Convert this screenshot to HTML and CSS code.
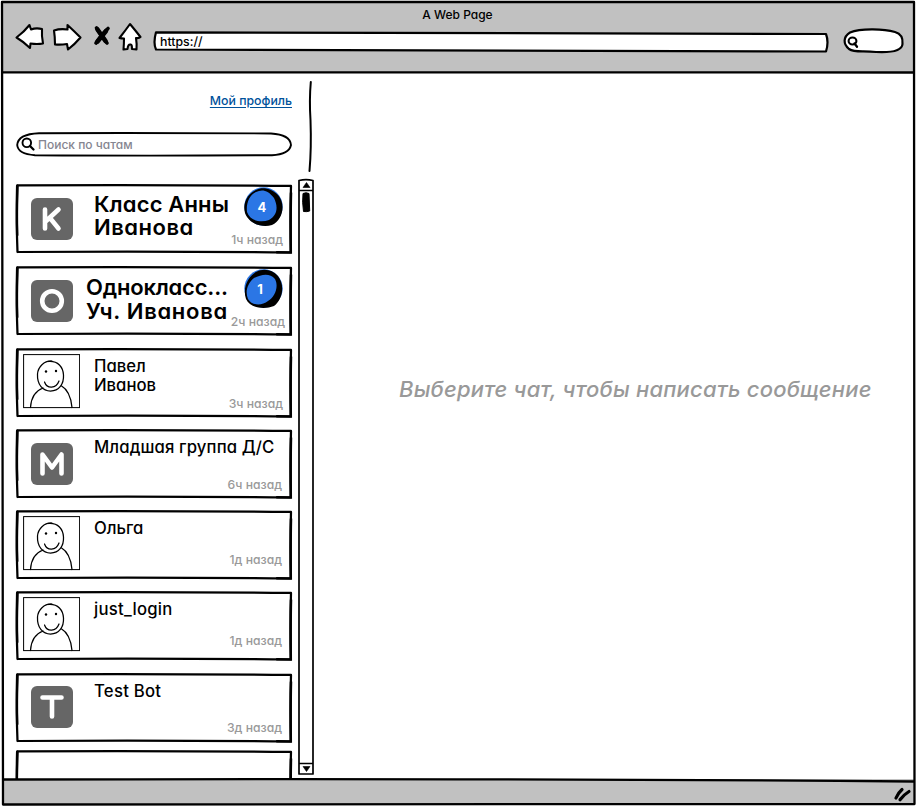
FILE: index.html
```html
<!DOCTYPE html>
<html lang="ru">
<head>
<meta charset="utf-8">
<title>A Web Page</title>
<link rel="stylesheet" href="styles.css">
</head>
<body>
<svg class="defs" width="0" height="0" aria-hidden="true">
  <defs>
    <symbol id="frame" viewBox="0 0 278 72">
      <path d="M2.500 2.300 Q140 1.500 276 2.900 Q275 35 275.800 69.500 Q140 68 2.500 69 Q1.200 40 2.500 2.300Z" fill="#fff" stroke="#000" stroke-width="2.250" stroke-linejoin="round"/>
      <path d="M2.200 2.800 Q1.500 30 2.200 52 M276 10 Q275.500 30 275.800 69.500 L262 69.300" fill="none" stroke="#000" stroke-width="2.500" stroke-linecap="round"/>
    </symbol>
    <symbol id="person" viewBox="0 0 57 55">
      <rect x=".6" y=".6" width="56" height="53" fill="#fff" stroke="#000"/>
      <path d="M7.500 53.500 C8 45 12 37 20 34 M38 31.500 C44 35 48 42 49 53.500 M29 7 C21 6.500 15 13 14.500 20 C14 31 20 37 27.500 37 C36 37 41 30 40.500 21 C40 13 35 7 26 7.500 M21.500 28 C24 35 33 35 36 27" fill="none" stroke="#000" stroke-width="1.250" stroke-linecap="round"/>
      <circle cx="23" cy="17.500" r="1.200"/><circle cx="33" cy="17" r="1.200"/>
    </symbol>
  </defs>
</svg>
<div class="window">
  <header class="chrome">
    <div class="title"><span>A Web Page</span></div>
    <div class="toolbar">
      <svg class="nav" width="130" height="34" viewBox="14 22 130 34">
        <g fill="#fff" stroke="#000" stroke-width="2.100" stroke-linejoin="round">
          <path d="M16.500 37.500 Q24 32 29.500 25 L31 29.500 Q36 27.500 42 29 Q41.500 36 43 43.500 Q37 44.500 30.500 43.500 L30 48 Q24 42 16.500 37.500Z"/>
          <path d="M54 30.500 Q60 28.500 67.500 29.500 L67.500 25 Q74 31 80.500 37.500 Q75 44 68 49.500 L67 44 Q61 45 55 44.500 Q55 37 54 30.500Z"/>
          <path d="M130 24 Q135 30 140.500 37 Q139 38.500 136 38 Q137 44 136.500 49.500 L132 49 Q132 44 130.500 44.500 Q128 44 127.500 49 L123.500 49.500 Q124 44 124 38.500 Q121 38.500 119.500 38 Q125 31 130 24Z"/>
        </g>
        <path d="M96.500 28 Q101 35 107 43 M108 28.500 Q101 35 96 43" fill="none" stroke="#000" stroke-width="3.600" stroke-linecap="round"/>
        <path d="M97.500 29.500 L105.500 41 M106 31 L97.500 41.500" fill="none" stroke="#000" stroke-width="4.600" stroke-linecap="round"/>
      </svg>
      <div class="address">
        <svg class="backdrop" viewBox="0 0 677 24"><path d="M3 2.300 Q340 2 673 4 Q676 12 673 21.500 Q340 20.500 3 19.500 Q0 13 3 2.300Z" fill="#fff" stroke="#000" stroke-width="2.200" stroke-linejoin="round"/></svg>
        <span>https://</span>
      </div>
      <svg class="find" width="64" height="28" viewBox="842 27 64 28"><path d="M850 32.500 C860 28.500 883 28.500 895 32 C902 34 903 39 902.500 44 C902 52 886 52.500 876 52 C862 50.500 855 53 849 49 C843 44 843 37 850 32.500Z" fill="#fff" stroke="#000" stroke-width="2.200"/><ellipse cx="852.500" cy="41" rx="3.900" ry="3.500" fill="none" stroke="#000" stroke-width="2.100"/><path d="M854.500 43.500 L857 46.800" stroke="#000" stroke-width="2.300" stroke-linecap="round"/></svg>
    </div>
  </header>

  <main class="content">
    <aside class="side">
      <div class="side-top">
        <a class="profile">Мой профиль</a>
        <div class="search">
          <svg class="backdrop" viewBox="0 0 278 26"><path d="M24 1.200 Q140 .8 256 1.500 Q275 2.500 276 13 Q274 22.500 257 23.200 Q130 24 20 23.200 Q3 22 2.200 13 Q3 2 24 1.200Z" fill="#fff" stroke="#000" stroke-width="1.900"/><circle cx="11.800" cy="10.800" r="4.300" fill="none" stroke="#000" stroke-width="1.900"/><path d="M15 14 L18.500 17.500" stroke="#000" stroke-width="2.300" stroke-linecap="round"/></svg>
          <span>Поиск по чатам</span>
        </div>
      </div>
      <div class="chats">
        <article class="card">
          <svg class="backdrop"><use href="#frame"/></svg>
          <svg class="tile" viewBox="0 0 42 42"><rect width="42" height="42" rx="6"/><path d="M14 11.500 V30.500 M27.500 11.500 L14 24 M19 20 L27.500 30.500"/></svg>
          <h2 class="name big"><span class="l1">Класс Анны</span><span class="l2">Иванова</span></h2>
          <time>1ч назад</time>
          <div class="badge">
            <svg class="backdrop" viewBox="0 0 42 42"><circle cx="21.500" cy="20.500" r="19.200" fill="#2b76e5"/><path d="M14 4 C21 0 30 3 36 9 C44 18 41 34 30 39 C20 42 7 38 3 27 C0 16 7 7 14 4Z M14 6 C7 9 4 18 5 26 C8 35 19 37 27 34 C36 29 36 20 32 12 C26 4 20 3 14 6Z" fill="#000" fill-rule="evenodd"/></svg><span>4</span>
          </div>
        </article>
        <article class="card">
          <svg class="backdrop"><use href="#frame"/></svg>
          <svg class="tile" viewBox="0 0 42 42"><rect width="42" height="42" rx="6"/><circle cx="21" cy="21" r="9.800"/></svg>
          <h2 class="name big tall"><span class="l3">Однокласс...</span><span class="l4">Уч. Иванова</span></h2>
          <time class="t2">2ч назад</time>
          <div class="badge">
            <svg class="backdrop" viewBox="0 0 42 42"><circle cx="21.500" cy="20.500" r="19.200" fill="#2b76e5"/><path d="M14 4 C21 0 30 1 36 8 C43 17 41 31 32 38 C22 42 8 40 4 31 C0 19 7 8 14 4Z M12 10 C5 16 3 24 6 31 C10 38 20 38 26 33 C33 29 37 19 33 11 C28 5 20 6 12 10Z" fill="#000" fill-rule="evenodd"/></svg><span class="one">1</span>
          </div>
        </article>
        <article class="card">
          <svg class="backdrop"><use href="#frame"/></svg>
          <svg class="photo"><use href="#person"/></svg>
          <h2 class="name">Павел<br>Иванов</h2>
          <time>3ч назад</time>
        </article>
        <article class="card up">
          <svg class="backdrop"><use href="#frame"/></svg>
          <svg class="tile" viewBox="0 0 42 42"><rect width="42" height="42" rx="6"/><path d="M11.500 30.500 V11.500 L21 24.500 L30.500 11.500 V30.500"/></svg>
          <h2 class="name group">Младшая группа Д/С</h2>
          <time class="t4">6ч назад</time>
        </article>
        <article class="card up">
          <svg class="backdrop"><use href="#frame"/></svg>
          <svg class="photo"><use href="#person"/></svg>
          <h2 class="name">Ольга</h2>
          <time class="high">1д назад</time>
        </article>
        <article class="card up">
          <svg class="backdrop"><use href="#frame"/></svg>
          <svg class="photo"><use href="#person"/></svg>
          <h2 class="name latin">just_login</h2>
          <time class="high">1д назад</time>
        </article>
        <article class="card">
          <svg class="backdrop"><use href="#frame"/></svg>
          <svg class="tile raised" viewBox="0 0 42 42"><rect width="42" height="42" rx="6"/><path d="M11.500 11.500 H30.500 M21 11.500 V30.500"/></svg>
          <h2 class="name latin">Test Bot</h2>
          <time class="t7">3д назад</time>
        </article>
        <article class="card last"><svg class="backdrop"><use href="#frame"/></svg></article>
      </div>
    </aside>
    <div class="rail">
      <svg class="divider" width="8" height="94" viewBox="306 80 8 94"><path d="M310.800 82 Q309.200 100 310.500 120 Q311.500 148 309.500 171" fill="none" stroke="#000" stroke-width="2" stroke-linecap="round"/></svg>
      <svg class="scroll" width="20" height="600" viewBox="297 178 20 600">
        <g fill="none" stroke="#000" stroke-width="1.700" stroke-linejoin="round"><path d="M299 180.500 Q306 178.800 313 180.500 L313 774 L299 774 L299 180.500Z M299 190.500 H313 M299 763.500 H313"/></g>
        <path d="M306.500 182.500 L310 187.500 H303Z M303 766.500 H310 L306.500 771.500Z" stroke="#000" stroke-width=".6"/>
        <path d="M303 193.500 Q306 192 309 193.500 L309.700 211 Q307 212 303.500 211.500 Q302 202 303 193.500Z" stroke="#000"/>
      </svg>
    </div>
    <section class="empty"><p>Выберите чат, чтобы написать сообщение</p></section>
  </main>

  <footer class="status"></footer>
  <svg class="outline" viewBox="0 0 916 807">
    <path d="M0 0 H916 V807 H0Z M2 2 H914 L914.500 804.500 H2.500Z" fill="#fff" fill-rule="evenodd"/>
    <g fill="none" stroke="#000" stroke-linejoin="round"><path d="M2 2 H914 Q913.500 400 914.500 804 Q450 805.800 3 804.500 Q1.500 400 2 2Z" stroke-width="2.300"/><path d="M2.500 72.300 Q300 73.500 914 72.500 M3 779.500 Q500 778 914 781.500" stroke-width="2.300"/></g>
    <path d="M896 798 Q898 793 902 789.500 M900 799.800 Q904 794.500 909 791.500" fill="none" stroke="#000" stroke-width="3.200" stroke-linecap="round"/>
  </svg>
</div>
</body>
</html>
```
FILE: styles.css
```css
* { box-sizing: border-box; }
body { margin: 0; background: #fff; overflow: hidden; }
.defs { position: absolute; }
.window {
  position: relative;
  width: 916px; height: 807px;
  display: grid;
  grid-template-rows: 73px 706px 28px;
  overflow: hidden;
  font-family: Inter, "Open Sans", sans-serif;
  font-feature-settings: "cv11" 1;
  font-weight: 500;
  color: #000;
}
.outline { position: absolute; left: 0; top: 0; width: 916px; height: 807px; pointer-events: none; }
.chrome, .status { background: #c1c1c1; }
.title { height: 22px; padding: 7px 1px 0 0; text-align: center; font-size: 12px; line-height: 16px; }
.toolbar { display: flex; align-items: flex-start; padding-left: 14px; }
.nav { display: block; flex: none; }
.address { position: relative; width: 677px; height: 24px; margin: 8px 0 0 9px; padding-left: 7px; font-size: 12.3px; line-height: 24px; }
.address span { position: relative; }
.find { display: block; margin: 5px 0 0 12px; flex: none; }
.backdrop { position: absolute; inset: 0; width: 100%; height: 100%; }

.content { display: grid; grid-template-columns: 297px 60px 1fr; overflow: hidden; }
.side { padding-left: 15px; }
.side-top { height: 110px; padding-top: 19px; }
.profile { display: block; width: 277px; text-align: right; font-size: 12.3px; line-height: 17px; color: #00529b; text-decoration: underline; text-underline-offset: 2px; text-decoration-thickness: 1px; }
.search { position: relative; width: 278px; height: 26px; margin-top: 23px; padding-left: 23px; font-size: 12px; line-height: 26px; color: #858590; }
.search span { position: relative; }
.card { position: relative; display: grid; grid-template-columns: 79px 1fr; align-content: start; width: 278px; height: 72px; margin-bottom: 10px; }
.card.up { margin-top: -1px; }
.card.last { margin-top: -5px; }
.tile { position: relative; width: 42px; height: 42px; margin: 15px 0 0 16px; fill: none; stroke: #fff; stroke-width: 4.6; stroke-linecap: round; stroke-linejoin: round; }
.raised { margin-top: 14px; }
.tile rect { fill: #666; stroke: none; }
.photo { position: relative; width: 57px; height: 55px; margin: 7px 0 0 8px; }
.name { position: relative; margin: 10px 0 0; font-size: 16.7px; line-height: 19px; font-weight: 500; white-space: nowrap; }
.group { letter-spacing: .12px; }
.latin { letter-spacing: .25px; }
.big { font-size: 22px; line-height: 23px; font-weight: 600; }
.big span { display: block; }
.l1 { letter-spacing: .15px; }
.l2 { letter-spacing: .5px; }
.l3 { letter-spacing: -.2px; }
.l4 { letter-spacing: .7px; }
.tall { line-height: 24px; margin-left: -8px; }
time { position: absolute; right: 10px; bottom: 7px; font-size: 12.2px; line-height: 16px; font-weight: 500; color: #999; white-space: nowrap; }
.t2 { right: 8px; }
.t4 { right: 11px; }
.high { right: 11px; bottom: 13px; }
.t7 { right: 11px; bottom: 8px; }
.badge { position: absolute; left: 227px; top: 3px; width: 42px; height: 42px; color: #fff; font-size: 13px; font-weight: 700; line-height: 42px; text-align: center; }
.badge span { position: relative; left: -1px; }
.badge .one { left: -3px; }
.rail { display: flex; flex-direction: column; }
.divider { margin: 7px 0 0 9px; flex: none; }
.scroll { margin-top: 4px; flex: none; }
.empty { padding: 301px 0 0 42px; }
.empty p { margin: 0; font-size: 22px; line-height: 30px; font-style: italic; letter-spacing: .2px; color: #999; white-space: nowrap; }
```
